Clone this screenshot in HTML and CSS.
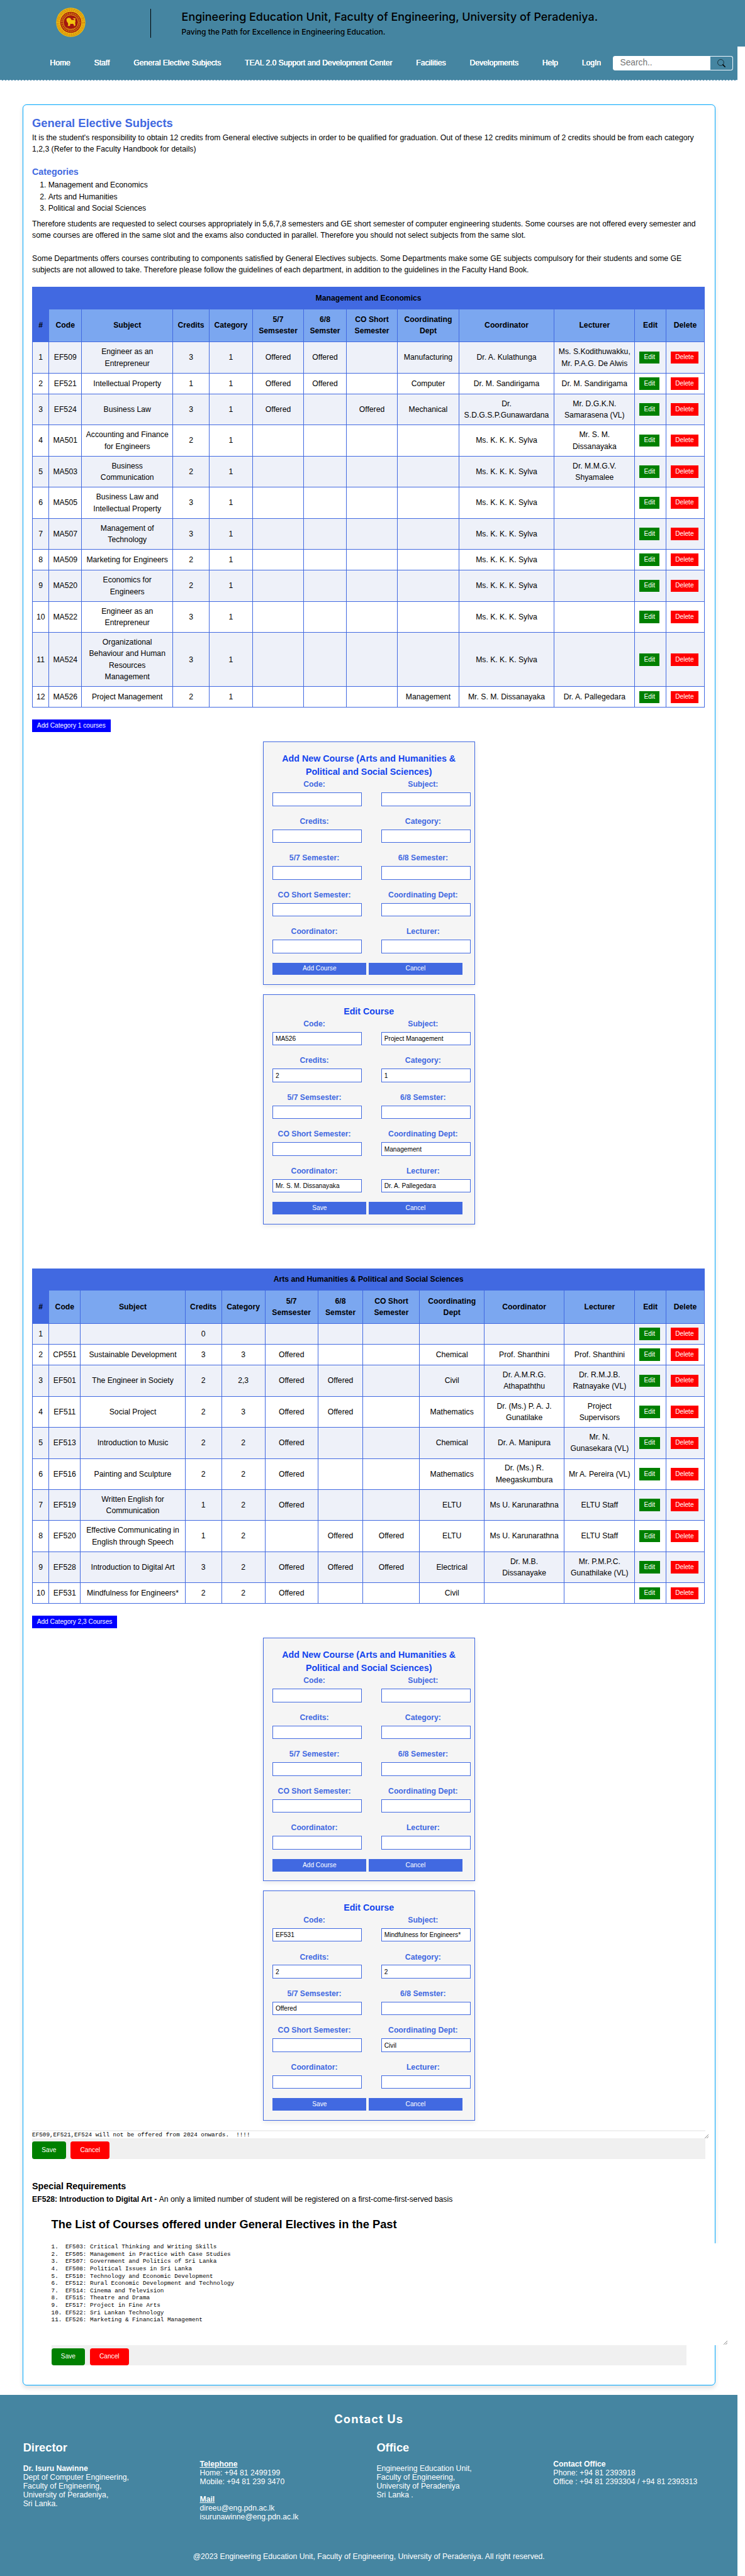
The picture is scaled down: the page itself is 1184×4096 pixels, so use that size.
FILE: index.html
```html
<!DOCTYPE html>
<html lang="en">
<head>
<meta charset="utf-8">
<title>General Elective Subjects</title>
<link rel="stylesheet" href="styles.css">
</head>
<body>
<div class="page">
<header class="top">
<svg class="logo" viewBox="0 0 77 77">
<circle cx="38.500" cy="38.500" r="38" fill="#f2c40f"/>
<circle cx="38.500" cy="38.500" r="33" fill="none" stroke="#b5540f" stroke-width="7" stroke-dasharray="1 1.600"/>
<circle cx="38.500" cy="38.500" r="33" fill="none" stroke="#f2c40f" stroke-width="1"/>
<circle cx="38.500" cy="38.500" r="27.500" fill="#a3170f"/>
<circle cx="38.500" cy="38.500" r="23.500" fill="none" stroke="#d98a12" stroke-width="4.500" stroke-dasharray="1.800 1.300 1 1.200"/>
<circle cx="38.500" cy="38.500" r="19.500" fill="#a3170f" stroke="#f2c40f" stroke-width="1.500"/>
<path d="M30 48c2-2 2-5 1-8c-3-2-3-5-4-8c1-4 5-6 8-5c3 0 4 3 5 5c3 1 6 1 8 0c0-2-3-2-5-3c3-2 8-1 9 1c-2 0-3 1-2 3c2 4-1 6 0 9c1 2 0 4 0 6h-4c2-2 0-4-2-6c-2 1-5 1-7 0c0 2 0 4-1 6h-6z" fill="#f2c40f"/>
<path d="M28 53c6 4 15 4 21 0" fill="none" stroke="#d98a12" stroke-width="2" stroke-dasharray="2 1"/>
</svg>
<div class="brand">
<div class="brand-title">Engineering Education Unit, Faculty of Engineering, University of Peradeniya.</div>
<div class="brand-sub">Paving the Path for Excellence in Engineering Education.</div>
</div>
</header>
<nav class="nav">
<a>Home</a><a>Staff</a><a>General Elective Subjects</a><a>TEAL 2.0 Support and Development Center</a><a>Facilities</a><a>Developments</a><a>Help</a><a>LogIn</a>
<div class="search"><span>Search..</span><button type="button"><svg viewBox="0 0 20 20"><circle cx="8.500" cy="8.500" r="7.600" fill="none" stroke="#000" stroke-width="1"/><path d="M13.800 13.800L19 19" stroke="#000" stroke-width="2.400" stroke-linecap="round"/></svg></button></div>
</nav>

<main class="panel">
<h2>General Elective Subjects</h2>
<p>It is the student's responsibility to obtain 12 credits from General elective subjects in order to be qualified for graduation. Out of these 12 credits minimum of 2 credits should be from each category<br>1,2,3 (Refer to the Faculty Handbook for details)</p>
<h3 class="cat">Categories</h3>
<ol><li>Management and Economics</li><li>Arts and Humanities</li><li>Political and Social Sciences</li></ol>
<p>Therefore students are requested to select courses appropriately in 5,6,7,8 semesters and GE short semester of computer engineering students. Some courses are not offered every semester and<br>some courses are offered in the same slot and the exams also conducted in parallel. Therefore you should not select subjects from the same slot.</p>
<p class="second">Some Departments offers courses contributing to components satisfied by General Electives subjects. Some Departments make some GE subjects compulsory for their students and some GE<br>subjects are not allowed to take. Therefore please follow the guidelines of each department, in addition to the guidelines in the Faculty Hand Book.</p>

<table class="courses">
<colgroup><col style="width:43px"><col style="width:85px"><col style="width:237.500px"><col style="width:94.500px"><col style="width:113px"><col style="width:133px"><col style="width:111px"><col style="width:133px"><col style="width:160px"><col style="width:248px"><col style="width:210px"><col style="width:81px"><col style="width:100px"></colgroup>
<thead>
<tr class="caption"><th colspan="13">Management and Economics</th></tr>
<tr class="heads"><th>#</th><th>Code</th><th>Subject</th><th>Credits</th><th>Category</th><th>5/7<br>Semsester</th><th>6/8<br>Semster</th><th>CO Short<br>Semester</th><th>Coordinating<br>Dept</th><th>Coordinator</th><th>Lecturer</th><th>Edit</th><th>Delete</th></tr>
</thead>
<tbody>
<tr class="two"><td>1</td><td>EF509</td><td>Engineer as an<br>Entrepreneur</td><td>3</td><td>1</td><td>Offered</td><td>Offered</td><td></td><td>Manufacturing</td><td>Dr. A. Kulathunga</td><td>Ms. S.Kodithuwakku,<br>Mr. P.A.G. De Alwis</td><td><button class="edit">Edit</button></td><td><button class="del">Delete</button></td></tr>
<tr><td>2</td><td>EF521</td><td>Intellectual Property</td><td>1</td><td>1</td><td>Offered</td><td>Offered</td><td></td><td>Computer</td><td>Dr. M. Sandirigama</td><td>Dr. M. Sandirigama</td><td><button class="edit">Edit</button></td><td><button class="del">Delete</button></td></tr>
<tr class="two"><td>3</td><td>EF524</td><td>Business Law</td><td>3</td><td>1</td><td>Offered</td><td></td><td>Offered</td><td>Mechanical</td><td>Dr.<br>S.D.G.S.P.Gunawardana</td><td>Mr. D.G.K.N.<br>Samarasena (VL)</td><td><button class="edit">Edit</button></td><td><button class="del">Delete</button></td></tr>
<tr class="two"><td>4</td><td>MA501</td><td>Accounting and Finance<br>for Engineers</td><td>2</td><td>1</td><td></td><td></td><td></td><td></td><td>Ms. K. K. K. Sylva</td><td>Mr. S. M.<br>Dissanayaka</td><td><button class="edit">Edit</button></td><td><button class="del">Delete</button></td></tr>
<tr class="two"><td>5</td><td>MA503</td><td>Business<br>Communication</td><td>2</td><td>1</td><td></td><td></td><td></td><td></td><td>Ms. K. K. K. Sylva</td><td>Dr. M.M.G.V.<br>Shyamalee</td><td><button class="edit">Edit</button></td><td><button class="del">Delete</button></td></tr>
<tr class="two"><td>6</td><td>MA505</td><td>Business Law and<br>Intellectual Property</td><td>3</td><td>1</td><td></td><td></td><td></td><td></td><td>Ms. K. K. K. Sylva</td><td></td><td><button class="edit">Edit</button></td><td><button class="del">Delete</button></td></tr>
<tr class="two"><td>7</td><td>MA507</td><td>Management of<br>Technology</td><td>3</td><td>1</td><td></td><td></td><td></td><td></td><td>Ms. K. K. K. Sylva</td><td></td><td><button class="edit">Edit</button></td><td><button class="del">Delete</button></td></tr>
<tr><td>8</td><td>MA509</td><td>Marketing for Engineers</td><td>2</td><td>1</td><td></td><td></td><td></td><td></td><td>Ms. K. K. K. Sylva</td><td></td><td><button class="edit">Edit</button></td><td><button class="del">Delete</button></td></tr>
<tr class="two"><td>9</td><td>MA520</td><td>Economics for<br>Engineers</td><td>2</td><td>1</td><td></td><td></td><td></td><td></td><td>Ms. K. K. K. Sylva</td><td></td><td><button class="edit">Edit</button></td><td><button class="del">Delete</button></td></tr>
<tr class="two"><td>10</td><td>MA522</td><td>Engineer as an<br>Entrepreneur</td><td>3</td><td>1</td><td></td><td></td><td></td><td></td><td>Ms. K. K. K. Sylva</td><td></td><td><button class="edit">Edit</button></td><td><button class="del">Delete</button></td></tr>
<tr class="four"><td>11</td><td>MA524</td><td>Organizational<br>Behaviour and Human<br>Resources<br>Management</td><td>3</td><td>1</td><td></td><td></td><td></td><td></td><td>Ms. K. K. K. Sylva</td><td></td><td><button class="edit">Edit</button></td><td><button class="del">Delete</button></td></tr>
<tr><td>12</td><td>MA526</td><td>Project Management</td><td>2</td><td>1</td><td></td><td></td><td></td><td>Management</td><td>Mr. S. M. Dissanayaka</td><td>Dr. A. Pallegedara</td><td><button class="edit">Edit</button></td><td><button class="del">Delete</button></td></tr>
</tbody>
</table>
<button class="add first">Add Category 1 courses</button>

<form class="card">
<h3>Add New Course (Arts and Humanities &amp;<br>Political and Social Sciences)</h3>
<div class="fields">
<label>Code:<input></label><label>Subject:<input></label>
<label>Credits:<input></label><label>Category:<input></label>
<label>5/7 Semester:<input></label><label>6/8 Semester:<input></label>
<label>CO Short Semester:<input></label><label>Coordinating Dept:<input></label>
<label>Coordinator:<input></label><label>Lecturer:<input></label>
</div>
<div class="actions"><button type="button">Add Course</button><button type="button">Cancel</button></div>
</form>
<form class="card">
<h3>Edit Course</h3>
<div class="fields">
<label>Code:<input value="MA526"></label><label>Subject:<input value="Project Management"></label>
<label>Credits:<input value="2"></label><label>Category:<input value="1"></label>
<label>5/7 Semsester:<input></label><label>6/8 Semster:<input></label>
<label>CO Short Semester:<input></label><label>Coordinating Dept:<input value="Management"></label>
<label>Coordinator:<input value="Mr. S. M. Dissanayaka"></label><label>Lecturer:<input value="Dr. A. Pallegedara"></label>
</div>
<div class="actions"><button type="button">Save</button><button type="button">Cancel</button></div>
</form>

<table class="courses arts">
<colgroup><col style="width:43px"><col style="width:82px"><col style="width:272.300px"><col style="width:95px"><col style="width:113px"><col style="width:137.700px"><col style="width:117.400px"><col style="width:147.500px"><col style="width:167.800px"><col style="width:208.600px"><col style="width:183.700px"><col style="width:81px"><col style="width:100px"></colgroup>
<thead>
<tr class="caption"><th colspan="13">Arts and Humanities &amp; Political and Social Sciences</th></tr>
<tr class="heads"><th>#</th><th>Code</th><th>Subject</th><th>Credits</th><th>Category</th><th>5/7<br>Semsester</th><th>6/8<br>Semster</th><th>CO Short<br>Semester</th><th>Coordinating<br>Dept</th><th>Coordinator</th><th>Lecturer</th><th>Edit</th><th>Delete</th></tr>
</thead>
<tbody>
<tr><td>1</td><td></td><td></td><td>0</td><td></td><td></td><td></td><td></td><td></td><td></td><td></td><td><button class="edit">Edit</button></td><td><button class="del">Delete</button></td></tr>
<tr><td>2</td><td>CP551</td><td>Sustainable Development</td><td>3</td><td>3</td><td>Offered</td><td></td><td></td><td>Chemical</td><td>Prof. Shanthini</td><td>Prof. Shanthini</td><td><button class="edit">Edit</button></td><td><button class="del">Delete</button></td></tr>
<tr class="two"><td>3</td><td>EF501</td><td>The Engineer in Society</td><td>2</td><td>2,3</td><td>Offered</td><td>Offered</td><td></td><td>Civil</td><td>Dr. A.M.R.G.<br>Athapaththu</td><td>Dr. R.M.J.B.<br>Ratnayake (VL)</td><td><button class="edit">Edit</button></td><td><button class="del">Delete</button></td></tr>
<tr class="two"><td>4</td><td>EF511</td><td>Social Project</td><td>2</td><td>3</td><td>Offered</td><td>Offered</td><td></td><td>Mathematics</td><td>Dr. (Ms.) P. A. J.<br>Gunatilake</td><td>Project<br>Supervisors</td><td><button class="edit">Edit</button></td><td><button class="del">Delete</button></td></tr>
<tr class="two"><td>5</td><td>EF513</td><td>Introduction to Music</td><td>2</td><td>2</td><td>Offered</td><td></td><td></td><td>Chemical</td><td>Dr. A. Manipura</td><td>Mr. N.<br>Gunasekara (VL)</td><td><button class="edit">Edit</button></td><td><button class="del">Delete</button></td></tr>
<tr class="two"><td>6</td><td>EF516</td><td>Painting and Sculpture</td><td>2</td><td>2</td><td>Offered</td><td></td><td></td><td>Mathematics</td><td>Dr. (Ms.) R.<br>Meegaskumbura</td><td>Mr A. Pereira (VL)</td><td><button class="edit">Edit</button></td><td><button class="del">Delete</button></td></tr>
<tr class="two"><td>7</td><td>EF519</td><td>Written English for<br>Communication</td><td>1</td><td>2</td><td>Offered</td><td></td><td></td><td>ELTU</td><td>Ms U. Karunarathna</td><td>ELTU Staff</td><td><button class="edit">Edit</button></td><td><button class="del">Delete</button></td></tr>
<tr class="two"><td>8</td><td>EF520</td><td>Effective Communicating in<br>English through Speech</td><td>1</td><td>2</td><td></td><td>Offered</td><td>Offered</td><td>ELTU</td><td>Ms U. Karunarathna</td><td>ELTU Staff</td><td><button class="edit">Edit</button></td><td><button class="del">Delete</button></td></tr>
<tr class="two"><td>9</td><td>EF528</td><td>Introduction to Digital Art</td><td>3</td><td>2</td><td>Offered</td><td>Offered</td><td>Offered</td><td>Electrical</td><td>Dr. M.B.<br>Dissanayake</td><td>Mr. P.M.P.C.<br>Gunathilake (VL)</td><td><button class="edit">Edit</button></td><td><button class="del">Delete</button></td></tr>
<tr><td>10</td><td>EF531</td><td>Mindfulness for Engineers*</td><td>2</td><td>2</td><td>Offered</td><td></td><td></td><td>Civil</td><td></td><td></td><td><button class="edit">Edit</button></td><td><button class="del">Delete</button></td></tr>
</tbody>
</table>
<button class="add second-add">Add Category 2,3 Courses</button>

<form class="card">
<h3>Add New Course (Arts and Humanities &amp;<br>Political and Social Sciences)</h3>
<div class="fields">
<label>Code:<input></label><label>Subject:<input></label>
<label>Credits:<input></label><label>Category:<input></label>
<label>5/7 Semester:<input></label><label>6/8 Semester:<input></label>
<label>CO Short Semester:<input></label><label>Coordinating Dept:<input></label>
<label>Coordinator:<input></label><label>Lecturer:<input></label>
</div>
<div class="actions"><button type="button">Add Course</button><button type="button">Cancel</button></div>
</form>
<form class="card">
<h3>Edit Course</h3>
<div class="fields">
<label>Code:<input value="EF531"></label><label>Subject:<input value="Mindfulness for Engineers*"></label>
<label>Credits:<input value="2"></label><label>Category:<input value="2"></label>
<label>5/7 Semsester:<input value="Offered"></label><label>6/8 Semster:<input></label>
<label>CO Short Semester:<input></label><label>Coordinating Dept:<input value="Civil"></label>
<label>Coordinator:<input></label><label>Lecturer:<input></label>
</div>
<div class="actions"><button type="button">Save</button><button type="button">Cancel</button></div>
</form>

<section class="note">
<div class="area"><pre>EF509,EF521,EF524 will not be offered from 2024 onwards.  !!!!</pre><svg class="grip" viewBox="0 0 10 10"><path d="M0 10L10 0M5 10L10 5" stroke="#555" stroke-width="1.200"/></svg></div>
<div class="bar"><button class="save">Save</button><button class="cancel">Cancel</button></div>
</section>

<h3 class="special">Special Requirements</h3>
<p><b>EF528: Introduction to Digital Art - </b>An only a limited number of student will be registered on a first-come-first-served basis</p>

<section class="past">
<h2>The List of Courses offered under General Electives in the Past</h2>
<div class="area"><pre>1.  EF503: Critical Thinking and Writing Skills
2.  EF505: Management in Practice with Case Studies
3.  EF507: Government and Politics of Sri Lanka
4.  EF508: Political Issues in Sri Lanka
5.  EF510: Technology and Economic Development
6.  EF512: Rural Economic Development and Technology
7.  EF514: Cinema and Television
8.  EF515: Theatre and Drama
9.  EF517: Project in Fine Arts
10. EF522: Sri Lankan Technology
11. EF526: Marketing &amp; Financial Management</pre><svg class="grip" viewBox="0 0 10 10"><path d="M0 10L10 0M5 10L10 5" stroke="#555" stroke-width="1.200"/></svg></div>
<div class="bar"><button class="save">Save</button><button class="cancel">Cancel</button></div>
</section>
</main>

<footer class="footer">
<div class="contact">Contact Us</div>
<div class="columns">
<div><h2>Director</h2><p><b>Dr. Isuru Nawinne</b><br>Dept of Computer Engineering,<br>Faculty of Engineering,<br>University of Peradeniya,<br>Sri Lanka.</p></div>
<div class="offset"><p><b><u>Telephone</u></b><br>Home: +94 81 2499199<br>Mobile: +94 81 239 3470<br><br><b><u>Mail</u></b><br>direeu@eng.pdn.ac.lk<br>isurunawinne@eng.pdn.ac.lk</p></div>
<div><h2>Office</h2><p>Engineering Education Unit,<br>Faculty of Engineering,<br>University of Peradeniya<br>Sri Lanka .</p></div>
<div class="offset"><p><b>Contact Office</b><br>Phone: +94 81 2393918<br>Office : +94 81 2393304 / +94 81 2393313</p></div>
</div>
<div class="copy">@2023 Engineering Education Unit, Faculty of Engineering, University of Peradeniya. All right reserved.</div>
</footer>
</div>
</body>
</html>
```
FILE: styles.css
```css
* { box-sizing: border-box; }
body { margin: 0; background: #fff; overflow: hidden; }
.page {
  zoom: 0.61062;
  width: 1939px;
  height: 6708px;
  display: flex;
  flex-direction: column;
  align-items: flex-start;
  font: 20px/30px "Liberation Sans", Arial, sans-serif;
  color: #000;
}
h2, h3, p, ol, pre { margin: 0; }
h2 { font-size: 30px; line-height: 45px; }
h3 { font-size: 23.4px; line-height: 35px; }
button { font: 16.67px/20px "Liberation Sans", Arial, sans-serif; color: #fff; border: 0; padding: 0; }

/* header */
.top { width: 1939px; height: 122px; flex: none; background: #4585a1; display: flex; padding: 20px 0 0 145px; }
.logo { width: 77px; height: 77px; flex: none; }
.brand { margin: 3px 0 0 170px; height: 75px; padding-left: 79px; border-left: 1px solid #000; white-space: nowrap; font-family: Inter, sans-serif; font-weight: 500; }
.brand-title { font-size: 29.4px; line-height: 40px; margin-top: 2px; }
.brand-sub { font-size: 19.7px; line-height: 26px; margin-top: 5px; }

/* navigation */
.nav { width: 1920px; height: 87px; flex: none; background: #4585a1; border-bottom: 1px dashed #dbe6f5; display: flex; align-items: center; padding-left: 99px; white-space: nowrap; }
.nav a { padding: 0 31px; font-size: 19.9px; color: #fff; text-shadow: 0 0 1px #fff, 0.5px 0 0 #fff; }
.search { margin: 0 12px 0 auto; width: 313px; flex: none; height: 38px; border-radius: 6px; background: #fff; display: flex; align-items: center; padding-left: 19px; color: #757575; font-size: 22.5px; overflow: hidden; }
.search button { margin-left: auto; width: 60px; height: 38px; border: 3px solid #f0f8ff; border-radius: 0 6px 6px 0; background: #4585a1; display: flex; align-items: center; justify-content: center; }
.search svg { width: 21px; height: 21px; }

/* main panel */
.panel { margin: 63px 0 0 58.5px; width: 1803px; height: 5940px; flex: none; border: 3px solid #00a8ff; border-radius: 10px; box-shadow: 0 5px 12px rgba(0,0,0,.12); padding: 24px 23.500px 0; }
.panel > p { white-space: nowrap; }
.panel > h2:first-child, .cat { color: #4169e1; }
.panel > h2:first-child { height: 46px; }
.cat { margin-top: 27px; height: 37px; }
ol { padding-left: 42px; margin-bottom: 11px; }
.second { margin-top: 30px; }

/* course tables */
.courses { width: 1750px; margin-top: 29px; border-collapse: collapse; table-layout: fixed; text-align: center; white-space: nowrap; }
.courses th, .courses td { border: 1px solid #4169e1; padding: 0; vertical-align: middle; }
.courses tr { height: 54.2px; }
.courses tr.two { height: 81px; }
.courses tr.four { height: 141px; }
.courses tr.caption { height: 56px; background: #4169e1; }
.courses tr.heads { height: 86.5px; background: #7ba7f0; }
.heads th:first-child { background: #4169e1; }
.courses tbody tr:nth-child(odd) { background: #eef1f9; }
.courses td button { display: block; height: 32px; margin-left: 11px; }
.edit { width: 53px; background: green; }
.del { width: 73px; background: red; }
.arts { margin-top: 115px; }
.add { display: block; background: #00f; height: 33px; margin-top: 30.5px; }
.first { width: 204px; }
.second-add { width: 221px; }

/* course forms */
.card { width: 552px; margin: 25px auto 0; border: 1px solid #4169e1; background: #f5f5f5; padding: 25px 24px 24px; box-shadow: 0 5px 12px rgba(0,0,0,.08); }
.card h3 { text-align: center; color: #1345ee; white-space: nowrap; }
.fields { display: grid; grid-template-columns: 217px 217px; column-gap: 66px; }
.fields label { display: block; height: 95.75px; font-weight: bold; color: #4169e1; text-align: center; white-space: nowrap; }
.fields input { display: block; width: 232px; height: 35px; margin-top: 6px; padding: 0 6px; border: 1px solid #4169e1; background: #fff; font: 16.67px "Liberation Sans", Arial, sans-serif; color: #000; }
.actions { display: flex; gap: 6px; height: 32.500px; }
.actions button { width: 244px; background: #4169e1; }

/* editable notes */
pre { font: 15.27px/19px "Liberation Mono", monospace; }
.note { margin-top: 25px; padding-top: 3px; background: #f0f0f0; height: 75px; }
.area { position: relative; background: #fff; }
.note .area { width: 1760px; height: 19px; }
.grip { position: absolute; right: 0; bottom: 1px; width: 10px; height: 10px; }
.bar { background: #f0f0f0; padding-top: 8px; display: flex; gap: 12px; }
.bar button { height: 45px; border-radius: 6px; }
.save { width: 88px; background: green; }
.cancel { width: 102px; background: red; }
.special { margin-top: 55px; height: 35.500px; }
.past { margin: 27.500px 50px 0; }
.past h2 { height: 71px; }
.past .area { width: 1760px; height: 266px; padding-top: 1px; }

/* footer */
.footer { width: 1920px; height: 471px; flex: none; margin-top: 25px; background: #4585a1; color: #fff; padding-top: 44px; line-height: 23px; }
.contact { text-align: center; font: bold 30px/36px Inter, sans-serif; letter-spacing: 1.8px; }
.columns { display: grid; grid-template-columns: repeat(4, 460px); padding-left: 60px; margin-top: 41px; height: 285px; white-space: nowrap; }
.columns h2 { line-height: 34px; margin-bottom: 24px; }
.offset { padding-top: 46.500px; }
.copy { text-align: center; margin-top: 3px; }
```
